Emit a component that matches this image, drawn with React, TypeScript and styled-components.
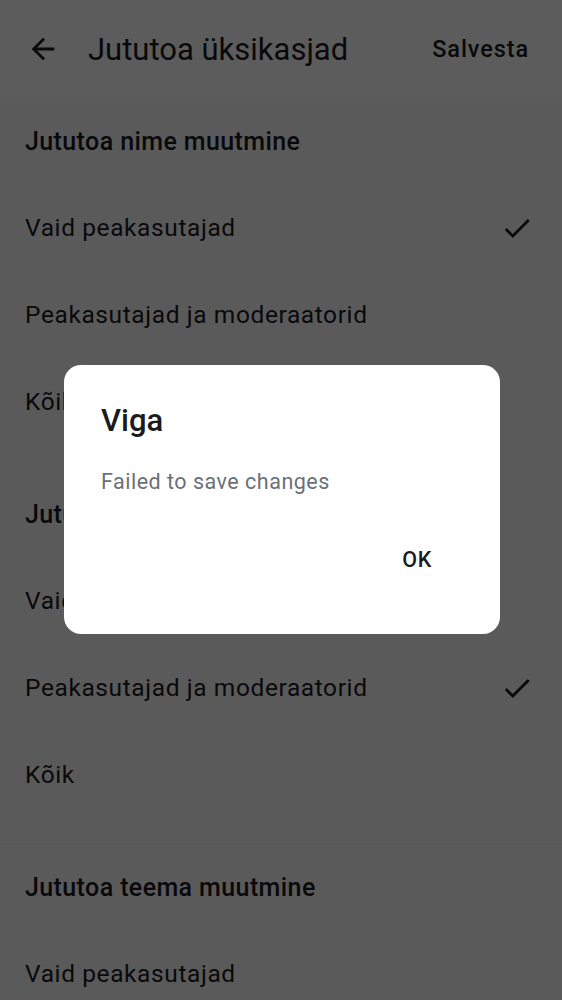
import * as React from 'react'
import styled, { createGlobalStyle } from 'styled-components'

const GlobalStyle = createGlobalStyle`
  html, body {
    margin: 0;
    padding: 0;
    background: #f7f7f7;
  }
  body {
    font-family: Roboto, "Noto Sans", "Liberation Sans", sans-serif;
    color: #1b1b1f;
    overflow: hidden;
  }
`

const Screen = styled.div`
  width: 562px;
  height: 1000px;
  overflow: hidden;
  background: #f7f7f7;
`

const AppBar = styled.header`
  height: 98px;
  display: flex;
  align-items: center;
  padding: 0 33px 0 26px;
  background: #fcfcfc;
`

const BackButton = styled.button`
  display: flex;
  align-items: center;
  justify-content: center;
  width: 34px;
  height: 34px;
  padding: 0;
  border: none;
  background: none;
  color: #1b1b1f;
`

const Title = styled.h1`
  flex: 1;
  margin: 0 0 0 28px;
  font-size: 31px;
  font-weight: 400;
  letter-spacing: 0;
  color: #1b1b1f;
`

const SaveButton = styled.button`
  border: none;
  background: none;
  padding: 0;
  font-family: inherit;
  font-size: 23.5px;
  font-weight: 500;
  letter-spacing: 0.9px;
  color: #1b1b1f;
`

const Section = styled.section`
  padding-bottom: 25px;
  border-bottom: 1px solid #ececec;
`

const SectionTitle = styled.h2`
  height: 86px;
  margin: 0;
  padding: 0 25px;
  display: flex;
  align-items: center;
  font-size: 25px;
  font-weight: 500;
  letter-spacing: 0.4px;
  color: #1b1b1f;
`

const Option = styled.div`
  height: 87px;
  display: flex;
  align-items: center;
  justify-content: space-between;
  padding: 0 28px 0 25px;
  font-size: 24.5px;
  letter-spacing: 0.6px;
  color: #1b1b1f;
`

const Overlay = styled.div`
  position: fixed;
  inset: 0;
  background: rgba(0, 0, 0, 0.635);
  display: flex;
  align-items: flex-start;
  justify-content: center;
`

const Dialog = styled.div`
  margin-top: 365px;
  margin-left: 2px;
  width: 436px;
  height: 269px;
  box-sizing: border-box;
  background: #ffffff;
  border-radius: 17px;
  padding: 38px 37px 0 37px;
  display: flex;
  flex-direction: column;
`

const DialogTitle = styled.h3`
  margin: 0;
  font-size: 31px;
  font-weight: 500;
  line-height: 36px;
  color: #1b1b1f;
`

const DialogText = styled.p`
  margin: 29px 0 0;
  font-size: 21.5px;
  line-height: 28px;
  letter-spacing: 0.5px;
  color: #6b7079;
`

const DialogActions = styled.div`
  display: flex;
  justify-content: flex-end;
  margin-top: 47px;
`

const TextButton = styled.button`
  border: none;
  background: none;
  padding: 4px 31px 4px 0;
  font-family: inherit;
  font-size: 21.5px;
  line-height: 26px;
  font-weight: 500;
  letter-spacing: 0.7px;
  color: #1b1b1f;
`

const ArrowBack = () => (
  <svg width="34" height="34" viewBox="0 0 24 24" fill="currentColor">
    <path d="M20 11H7.83l5.59-5.59L12 4l-8 8 8 8 1.41-1.41L7.83 13H20v-2z" />
  </svg>
)

const Check = () => (
  <svg width="34" height="34" viewBox="0 0 24 24" fill="currentColor">
    <path d="M9 16.17 4.83 12l-1.42 1.41L9 19 21 7l-1.41-1.41z" />
  </svg>
)

interface Group {
  title: string;
  selected: number | null;
}

const choices = ['Vaid peakasutajad', 'Peakasutajad ja moderaatorid', 'Kõik']

const groups: Group[] = [
  { title: 'Jututoa nime muutmine', selected: 0 },
  { title: 'Jututoa nime muutmine', selected: 1 },
  { title: 'Jututoa teema muutmine', selected: null },
]

export default function App () {
  return (
    <Screen>
      <GlobalStyle />
      <AppBar>
        <BackButton aria-label="Tagasi"><ArrowBack /></BackButton>
        <Title>Jututoa üksikasjad</Title>
        <SaveButton>Salvesta</SaveButton>
      </AppBar>
      {groups.map((group, i) => (
        <Section key={i}>
          <SectionTitle>{group.title}</SectionTitle>
          {choices.map((choice, j) => (
            <Option key={choice}>
              <span>{choice}</span>
              {j === group.selected && <Check />}
            </Option>
          ))}
        </Section>
      ))}
      <Overlay>
        <Dialog role="alertdialog">
          <DialogTitle>Viga</DialogTitle>
          <DialogText>Failed to save changes</DialogText>
          <DialogActions>
            <TextButton>OK</TextButton>
          </DialogActions>
        </Dialog>
      </Overlay>
    </Screen>
  )
}
